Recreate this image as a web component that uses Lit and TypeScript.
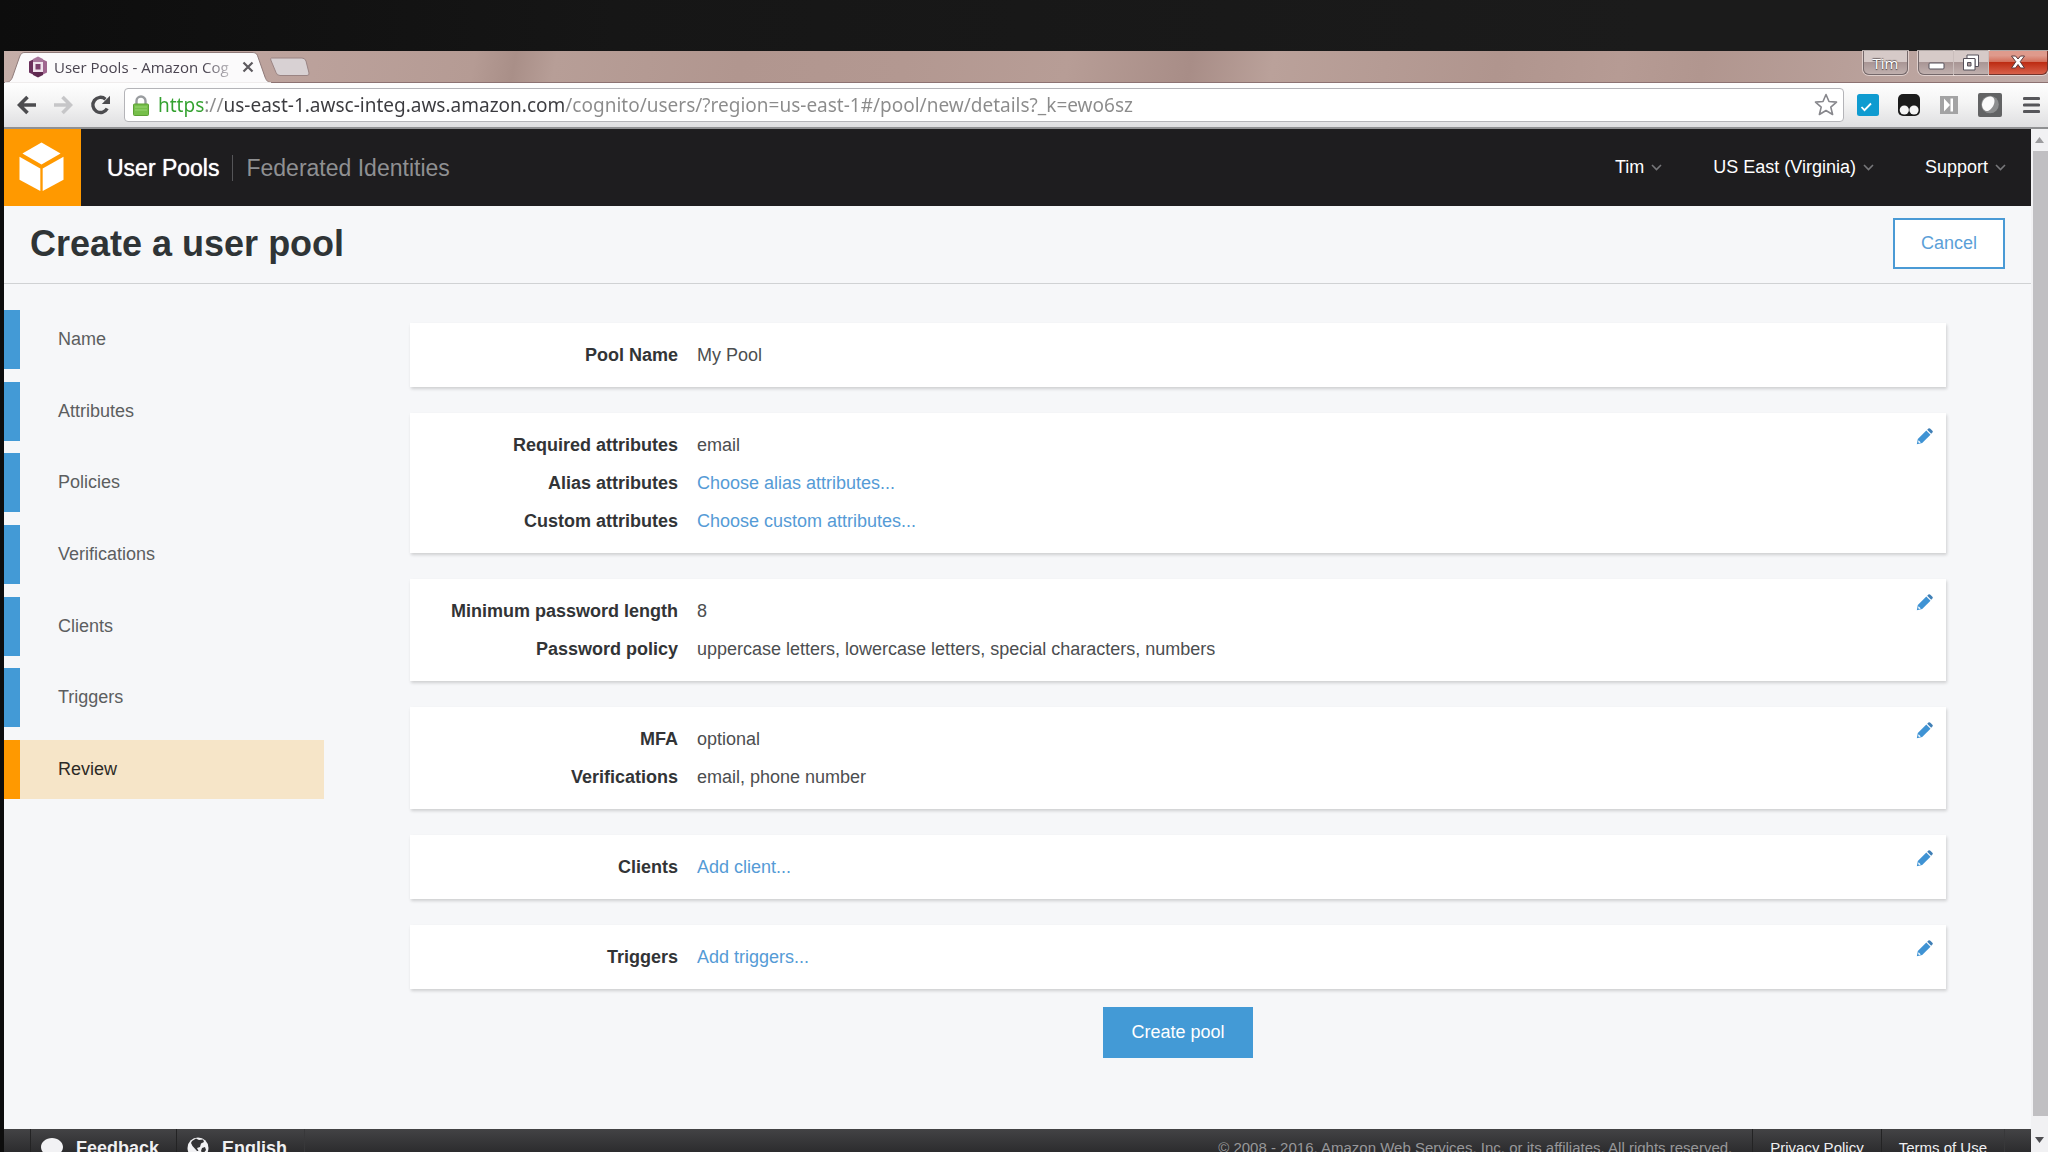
import { LitElement, html, css, svg, nothing } from "lit";
import { customElement, property, query } from "lit/decorators.js";
import { classMap } from "lit/directives/class-map.js";

interface Row {
  label: string;
  value: string;
  link?: boolean;
}

interface Section {
  rows: Row[];
  editable: boolean;
}

const STEPS = ["Name", "Attributes", "Policies", "Verifications", "Clients", "Triggers", "Review"];
const ACTIVE_STEP = "Review";

const SECTIONS: Section[] = [
  { editable: false, rows: [{ label: "Pool Name", value: "My Pool" }] },
  {
    editable: true,
    rows: [
      { label: "Required attributes", value: "email" },
      { label: "Alias attributes", value: "Choose alias attributes...", link: true },
      { label: "Custom attributes", value: "Choose custom attributes...", link: true },
    ],
  },
  {
    editable: true,
    rows: [
      { label: "Minimum password length", value: "8" },
      { label: "Password policy", value: "uppercase letters, lowercase letters, special characters, numbers" },
    ],
  },
  {
    editable: true,
    rows: [
      { label: "MFA", value: "optional" },
      { label: "Verifications", value: "email, phone number" },
    ],
  },
  { editable: true, rows: [{ label: "Clients", value: "Add client...", link: true }] },
  { editable: true, rows: [{ label: "Triggers", value: "Add triggers...", link: true }] },
];

const SCHEME = "https";
const HOST = "us-east-1.awsc-integ.aws.amazon.com";
const PATH = "/cognito/users/?region=us-east-1#/pool/new/details?_k=ewo6sz";

const chevron = svg`<svg class="chevron" width="11" height="7" viewBox="0 0 11 7" aria-hidden="true">
  <path d="M1 1l4.5 4.5L10 1" fill="none" stroke="#77777a" stroke-width="1.6"/></svg>`;

/* Title strip and toolbar of the browser window. */
@customElement("browser-chrome")
export class BrowserChrome extends LitElement {
  @query(".url") private urlInput!: HTMLInputElement;

  static styles = css`
    :host {
      display: block;
      font-family: "Open Sans", "Noto Sans", sans-serif;
    }
    button {
      appearance: none;
      border: 0;
      padding: 0;
      margin: 0;
      background: none;
      font: inherit;
      display: grid;
      place-items: center;
    }
    svg {
      display: block;
    }
    .strip {
      display: flex;
      height: 32px;
      box-sizing: border-box;
      border-bottom: 1px solid #8c7272;
      background: linear-gradient(
        100deg,
        #c5aea8 0%, #bca29c 14%, #b59b94 23%, #a98f88 25%, #b79e97 27%, #b1968f 36%,
        #b39891 44%, #b79d96 52%, #a88d87 58%, #baa19a 62%, #b0958e 73%, #b69b94 79%,
        #b1968f 83%, #b89f99 90%, #c2aeab 100%
      );
    }
    .tab {
      position: relative;
      display: flex;
      align-items: center;
      width: 266px;
      height: 32px;
      box-sizing: border-box;
      padding: 0 15px 0 24px;
      font-size: 15px;
      color: #4a4450;
    }
    .tab-shape {
      position: absolute;
      left: 0;
      top: 0;
    }
    .tab-icon {
      position: relative;
      flex: none;
    }
    .tab-title {
      position: relative;
      flex: 1;
      margin: 0 11px 0 6px;
      white-space: nowrap;
      overflow: hidden;
      -webkit-mask-image: linear-gradient(90deg, #000 85%, rgba(0, 0, 0, 0.3));
      mask-image: linear-gradient(90deg, #000 85%, rgba(0, 0, 0, 0.3));
    }
    .tab-close {
      position: relative;
      width: 14px;
      height: 14px;
    }
    .new-tab {
      align-self: flex-start;
      margin-top: 6px;
    }
    .controls {
      display: flex;
      align-items: flex-start;
      margin-left: auto;
    }
    .glass {
      height: 24px;
      box-sizing: border-box;
      border: 1px solid #74686a;
      border-top: 0;
      box-shadow: 0 0 0 1px rgba(240, 226, 224, 0.7);
      background: linear-gradient(#d6cac8 0 48%, #a99695 50%, #c0b0ae);
    }
    .user {
      width: 45px;
      margin-right: 10px;
      border-radius: 0 0 6px 6px;
      font-size: 15px;
      line-height: 20px;
      color: #ffffff;
      text-shadow: 0 1px 1px #4b4345, 0 -1px 1px #6f6567;
    }
    .minimize {
      width: 36px;
      border-radius: 0 0 0 6px;
    }
    .restore {
      width: 35px;
      border-left: 0;
    }
    .close {
      width: 59px;
      border-left: 0;
      border-color: #74332b;
      border-radius: 0 0 6px 0;
      background: linear-gradient(#df9a8c 0 20%, #d3705c 46%, #bd2c13 50%, #d8604a);
    }
    .bar {
      display: flex;
      align-items: center;
      height: 46px;
      box-sizing: border-box;
      padding: 0 8px 0 13px;
      border-bottom: 2px solid #8f9092;
      background: linear-gradient(#fefefe, #f4f4f4 45%, #dfdfe1);
    }
    .nav {
      display: flex;
      gap: 16px;
      margin-right: 13px;
    }
    .address {
      flex: 1;
      display: flex;
      align-items: center;
      height: 34px;
      box-sizing: border-box;
      margin-right: 13px;
      padding: 0 5px 0 8px;
      border: 1px solid #b4b4b8;
      border-radius: 4px;
      background: #fff;
    }
    .url {
      --scheme-end: 46px;
      --host-start: 66px;
      --host-end: 410px;
      flex: 1;
      min-width: 0;
      margin: 0 8px 0 9px;
      padding: 0;
      border: 0;
      outline: 0;
      font-family: "Noto Sans", "Open Sans", sans-serif;
      font-size: 19px;
      line-height: 28px;
      background: linear-gradient(
        90deg,
        #33a12f 0 var(--scheme-end),
        #8b8b8b var(--scheme-end) var(--host-start),
        #3b3b3f var(--host-start) var(--host-end),
        #8b8b8b var(--host-end)
      );
      -webkit-background-clip: text;
      background-clip: text;
      color: transparent;
    }
    .extensions {
      display: flex;
      align-items: center;
      gap: 19px;
    }
    .menu {
      margin-left: 2px;
    }
  `;

  /* Places the colour stops of the address at the ends of its scheme and host. */
  firstUpdated() {
    const context = document.createElement("canvas").getContext("2d");
    if (!context) return;
    const { fontSize, fontFamily } = getComputedStyle(this.urlInput);
    context.font = `${fontSize} ${fontFamily}`;
    const width = (text: string) => `${Math.round(context.measureText(text).width)}px`;
    const style = this.urlInput.style;
    style.setProperty("--scheme-end", width(SCHEME));
    style.setProperty("--host-start", width(`${SCHEME}://`));
    style.setProperty("--host-end", width(`${SCHEME}://${HOST}`));
  }

  render() {
    return html`
      <div class="strip">
        <div class="tab">
          <svg class="tab-shape" width="268" height="32" viewBox="0 0 268 32" aria-hidden="true">
            <path d="M0 32V31.500C5 31.500 7 30 8.500 26L15.500 6C17 2.500 18 1.500 21 1.500H248C251.500 1.500 253 2.500 254 6L261 26C262.500 30 264 31.500 268 31.500V32Z" fill="#fbfafb" stroke="#8f7a79" stroke-width="1"/>
            <path d="M1 32h266" stroke="#fdfdfd" stroke-width="1.500"/>
          </svg>
          <svg class="tab-icon" width="20" height="22" viewBox="0 0 20 22" aria-hidden="true">
            <path d="M10 .5l5 2.500v3H5V3z" fill="#a8769b"/>
            <path d="M1 5.500l4-2v15l-4-2z" fill="#6b2f5c"/>
            <path d="M19 5.500l-4-2v15l4-2z" fill="#a0668f"/>
            <path d="M5 16h10v3l-5 2.500L5 19z" fill="#5f2950"/>
            <path d="M5 6h10v10H5z" fill="#efe2ec"/>
            <path d="M7.500 8h5v5.500h-5z" fill="#7b3f6c"/>
          </svg>
          <span class="tab-title">User Pools - Amazon Cognito</span>
          <button class="tab-close" aria-label="Close tab">
            <svg width="12" height="12" viewBox="0 0 12 12"><path d="M1.500 1.500l9 9M10.500 1.500l-9 9" stroke="#5d5a5f" stroke-width="2.200"/></svg>
          </button>
        </div>
        <button class="new-tab" aria-label="New tab">
          <svg width="40" height="20" viewBox="0 0 40 20">
            <path d="M1.500 1H32q3 0 4 3l3 12q.5 2.500-2 2.500H10q-3 0-4-3L.8 3Q.3 1 1.500 1z" fill="#d8d1d3" stroke="#9a8483"/>
          </svg>
        </button>
        <div class="controls">
          <button class="glass user">Tim</button>
          <button class="glass minimize" aria-label="Minimize">
            <svg width="17" height="20" viewBox="0 0 17 20"><rect x="1" y="10" width="15" height="6" rx="1" fill="#fff" stroke="#55505a"/></svg>
          </button>
          <button class="glass restore" aria-label="Restore">
            <svg width="18" height="18" viewBox="0 0 18 18">
              <path d="M5 1h11.500v11.500H13V5H5z" fill="#fff" stroke="#55505a"/>
              <path d="M1.500 4.500h11.500V16H1.500zM5.500 8.500v3.500h3.500V8.500z" fill="#fff" fill-rule="evenodd" stroke="#55505a"/>
            </svg>
          </button>
          <button class="glass close" aria-label="Close">
            <svg width="16" height="18" viewBox="0 0 16 18">
              <path d="M1.500 2h4L8 5l2.500-3h4l-4.300 5.700L14.500 14h-4L8 10.500 5.500 14h-4l4.300-6.300z" fill="#fff" stroke="#5b3a3c"/>
            </svg>
          </button>
        </div>
      </div>
      <div class="bar">
        <div class="nav">
          <button aria-label="Back">
            <svg width="20" height="20" viewBox="0 0 20 20"><path d="M19 10H4M10.500 2L2.500 10l8 8" fill="none" stroke="#4c4c4f" stroke-width="3.600"/></svg>
          </button>
          <button aria-label="Forward">
            <svg width="20" height="20" viewBox="0 0 20 20"><path d="M1 10h15M9.500 2l8 8-8 8" fill="none" stroke="#c6c6c8" stroke-width="3.600"/></svg>
          </button>
          <button aria-label="Reload">
            <svg width="22" height="20" viewBox="0 0 22 20">
              <path d="M18.200 13.500A7.600 7.600 0 1 1 16.500 4.200" fill="none" stroke="#4c4c4f" stroke-width="3.400"/>
              <path d="M21 .8v8.200h-8.200z" fill="#4c4c4f"/>
            </svg>
          </button>
        </div>
        <div class="address">
          <svg width="16" height="21" viewBox="0 0 16 21" aria-hidden="true">
            <path d="M3.500 10V6a4.500 4.500 0 0 1 9 0v4" fill="none" stroke="#9a9da0" stroke-width="2.400"/>
            <rect x=".5" y="9" width="15" height="11.500" rx="1" fill="#76bf4a" stroke="#5da035"/>
            <path d="M2 12h12M2 15h12" stroke="#9ad574" stroke-width="1.200"/>
          </svg>
          <input class="url" type="text" aria-label="Address" .value=${`${SCHEME}://${HOST}${PATH}`} />
          <button aria-label="Bookmark this page">
            <svg width="24" height="24" viewBox="0 0 24 24">
              <path d="M12 1.500l3 7 7.500.6-5.700 5 1.800 7.400-6.600-4-6.600 4 1.800-7.400-5.700-5L9 8.500z" fill="#fff" stroke="#87878c" stroke-width="1.600" stroke-linejoin="round"/>
            </svg>
          </button>
        </div>
        <div class="extensions">
          <button aria-label="Checklist">
            <svg width="22" height="22" viewBox="0 0 22 22"><rect width="22" height="22" rx="2.500" fill="#0f9bd0"/><path d="M4.500 13l3 3.200L14 9.500" fill="none" stroke="#fff" stroke-width="1.800"/></svg>
          </button>
          <button aria-label="User scripts">
            <svg width="22" height="22" viewBox="0 0 22 22"><rect width="22" height="22" rx="5" fill="#1b1b1b"/><circle cx="6.300" cy="16" r="4.600" fill="#f5f5f5"/><circle cx="16" cy="16" r="4.600" fill="#f5f5f5"/></svg>
          </button>
          <button aria-label="Skip">
            <svg width="20" height="20" viewBox="0 0 20 20"><rect x="1" y="1" width="18" height="18" fill="#a3a3a4"/><path d="M5 3.500l6 6.500-6 6.500zM11.500 3.500H14v13h-2.500z" fill="#fff"/></svg>
          </button>
          <button aria-label="Shade">
            <svg width="24" height="24" viewBox="0 0 24 24"><rect width="24" height="24" rx="2" fill="#626364"/><circle cx="12" cy="11.500" r="8.800" fill="#8d8e8f"/><path d="M4 12C4 7 8 3 13 3.500c3.500.8 4 4 3 7.500-1 3-3 5.500-6 7C7 18.500 4.300 16 4 12z" fill="#fafafa"/></svg>
          </button>
          <button class="menu" aria-label="Menu">
            <svg width="17" height="18" viewBox="0 0 17 18"><path d="M1.500 2.500h14M1.500 9h14M1.500 15.500h14" stroke="#56565a" stroke-width="3.200" stroke-linecap="round"/></svg>
          </button>
        </div>
      </div>
    `;
  }
}

/* One white panel of label and value pairs, with an optional edit button. */
@customElement("review-card")
export class ReviewCard extends LitElement {
  @property({ attribute: false }) section!: Section;

  static styles = css`
    :host {
      display: flex;
      align-items: flex-start;
      padding: 13px;
      background: #fff;
      box-shadow: 1px 2px 3px rgba(0, 0, 0, 0.16);
    }
    .rows {
      flex: 1;
      margin: 0;
    }
    .row {
      display: grid;
      grid-template-columns: 255px 1fr;
      column-gap: 19px;
      line-height: 38px;
    }
    .label {
      text-align: right;
      font-weight: bold;
      color: #323436;
      white-space: nowrap;
    }
    .value {
      margin: 0;
      color: #4c4e50;
    }
    .link {
      color: #559bd6;
      text-decoration: none;
    }
    .edit {
      appearance: none;
      margin: 2px 0 0;
      padding: 0;
      border: 0;
      background: none;
    }
    .pencil {
      display: block;
    }
  `;

  render() {
    const { rows, editable } = this.section;
    return html`
      <dl class="rows">
        ${rows.map(
          (row) => html`
            <div class="row">
              <dt class="label">${row.label}</dt>
              <dd class="value">
                ${row.link ? html`<a class="link" href="#">${row.value}</a>` : row.value}
              </dd>
            </div>
          `
        )}
      </dl>
      ${editable
        ? html`<button class="edit" aria-label=${`Edit ${rows[0].label}`}>
            <svg class="pencil" width="17" height="17" viewBox="0 0 17 17">
              <path d="M10.300 2.600l4.200 4.200-8.300 8.300L.8 16.300l1-5.400z" fill="#3f93d4"/>
              <path d="M11.200 1.800l1.200-1.200q1-.8 2 .1l2 2q.8.900 0 1.900l-1.200 1.200z" fill="#3f7fb6"/>
              <path d="M2.600 12.200l2.200 2.200-1.700.5-1-1z" fill="#fff"/>
            </svg>
          </button>`
        : nothing}
    `;
  }
}

@customElement("app-root")
export class AppRoot extends LitElement {
  static styles = css`
    :host {
      display: flex;
      flex-direction: column;
      height: 100vh;
      overflow: hidden;
      box-sizing: border-box;
      padding: 51px 0 0 4px;
      background: linear-gradient(90deg, #0d0d0d, #161616 30%, #1b1b1b 80%);
      font-family: "Liberation Sans", Arial, sans-serif;
      font-size: 18px;
    }
    button {
      appearance: none;
      margin: 0;
      font: inherit;
    }
    a {
      text-decoration: none;
      color: inherit;
    }
    .viewport {
      flex: 1;
      min-height: 0;
      display: flex;
    }
    .page {
      flex: 1;
      min-width: 0;
      display: flex;
      flex-direction: column;
      background: #f6f7f9;
    }
    .header {
      display: flex;
      align-items: center;
      height: 77px;
      padding-right: 25px;
      background: #1e1d1f;
      color: #fff;
    }
    .logo {
      display: grid;
      place-items: center;
      align-self: stretch;
      box-sizing: border-box;
      width: 77px;
      margin-right: 26px;
      padding: 0 2px 2px 0;
      background: #ff9900;
    }
    .product {
      font-size: 23px;
      line-height: 26px;
      padding-right: 13px;
      border-right: 1px solid #555558;
      text-shadow: 0 0 1px #fff;
    }
    .federated {
      font-size: 23px;
      line-height: 26px;
      padding-left: 13px;
      color: #8f9092;
    }
    .menus {
      display: flex;
      gap: 51px;
      margin-left: auto;
    }
    .drop {
      display: flex;
      align-items: center;
      gap: 7px;
      padding: 0;
      border: 0;
      background: none;
      color: #fff;
    }
    .titlebar {
      display: flex;
      justify-content: space-between;
      align-items: center;
      height: 78px;
      box-sizing: border-box;
      padding: 0 26px 2px;
      border-bottom: 1px solid #d0d2d4;
    }
    .title {
      margin: 0;
      font-size: 36px;
      line-height: 40px;
      color: #2f3436;
    }
    .cancel {
      height: 51px;
      box-sizing: border-box;
      padding: 0 26px;
      border: 2px solid #4a9ad5;
      background: #fff;
      color: #5b9fd8;
    }
    .body {
      flex: 1;
      min-height: 0;
      display: flex;
      align-items: flex-start;
      padding-top: 26px;
    }
    .steps {
      display: flex;
      flex-direction: column;
      justify-content: space-between;
      width: 320px;
      min-height: 489px;
      margin: 0;
      padding: 0;
      list-style: none;
    }
    .step {
      display: block;
      padding-left: 38px;
      border-left: 16px solid #439ad6;
      line-height: 59px;
      color: #5c5e60;
    }
    .active {
      border-color: #ff9900;
      background: #f6e5c8;
      color: #2d2a26;
    }
    .content {
      flex: 1;
      display: flex;
      flex-direction: column;
      gap: 26px;
      padding: 13px 85px 0 86px;
    }
    .create {
      align-self: center;
      height: 51px;
      margin-top: -8px;
      padding: 0 28px;
      border: 0;
      background: #439ad6;
      color: #fff;
    }
    .footer {
      flex: none;
      display: flex;
      align-items: flex-start;
      height: 23px;
      overflow: hidden;
      padding: 0 26px;
      background: linear-gradient(#434345, #2c2c2e);
      color: #fff;
      line-height: 38px;
    }
    .foot-item {
      display: flex;
      align-items: center;
      gap: 13px;
      padding: 0 17px 0 10px;
      border-left: 1px solid #232324;
      font-weight: bold;
      color: #f0f0f2;
    }
    .foot-end {
      border-right: 1px solid #38383a;
    }
    .copyright {
      margin-left: auto;
      padding-right: 20px;
      font-size: 15px;
      color: #98989a;
    }
    .foot-link {
      padding: 0 17px;
      border-left: 1px solid #232324;
      font-size: 15px;
      color: #f0f0f2;
    }
    .scrollbar {
      display: flex;
      flex-direction: column;
      width: 17px;
      background: #f1f1f3;
    }
    .arrow {
      height: 22px;
      padding: 0;
      border: 0;
      background: none;
      display: grid;
      place-items: center;
    }
    .arrow-down {
      height: 36px;
      padding-top: 12px;
    }
    .thumb {
      flex: 1;
      margin-left: 2px;
      background: #c0bfc2;
    }
  `;

  render() {
    return html`
      <browser-chrome></browser-chrome>
      <div class="viewport">
        <div class="page">
          <header class="header">
            <a class="logo" href="#" aria-label="Console home">
              <svg width="45" height="50" viewBox="0 0 46 50">
                <path d="M23 0l19.500 11.200L23 22.500 3.500 11.200z" fill="#fff"/>
                <path d="M.5 14.500L21.800 26.500V49.500L.5 38z" fill="#fff"/>
                <path d="M45.500 14.500L24.200 26.500V49.500L45.500 38z" fill="#fff"/>
              </svg>
            </a>
            <a class="product" href="#">User Pools</a>
            <a class="federated" href="#">Federated Identities</a>
            <div class="menus">
              ${["Tim", "US East (Virginia)", "Support"].map(
                (label) => html`<button class="drop">${label} ${chevron}</button>`
              )}
            </div>
          </header>
          <div class="titlebar">
            <h1 class="title">Create a user pool</h1>
            <button class="cancel">Cancel</button>
          </div>
          <div class="body">
            <nav>
              <ul class="steps">
                ${STEPS.map(
                  (step) => html`<li>
                    <a class=${classMap({ step: true, active: step === ACTIVE_STEP })} href="#">${step}</a>
                  </li>`
                )}
              </ul>
            </nav>
            <main class="content">
              ${SECTIONS.map((section) => html`<review-card .section=${section}></review-card>`)}
              <button class="create">Create pool</button>
            </main>
          </div>
          <footer class="footer">
            <a class="foot-item" href="#">
              <svg width="22" height="20" viewBox="0 0 22 20"><path d="M11 0c6 0 11 4 11 9s-5 9-11 9l-6 2 1-3C2.500 15.500 0 12.500 0 9c0-5 5-9 11-9z" fill="#f2f2f4"/></svg>
              Feedback
            </a>
            <a class="foot-item foot-end" href="#">
              <svg width="22" height="22" viewBox="0 0 22 22"><circle cx="11" cy="11" r="10.500" fill="#f2f2f4"/><path d="M5 4l4-2.500 3 1.500 4-.5 1 2.500-3 1.500-1 3.500-3 1 1.500 3L10 14 5.500 9 4 6z" fill="#343436"/><path d="M15 11l3-1 1 3-3 4-2-3z" fill="#343436"/></svg>
              English
            </a>
            <span class="copyright">© 2008 - 2016, Amazon Web Services, Inc. or its affiliates. All rights reserved.</span>
            <a class="foot-link" href="#">Privacy Policy</a>
            <a class="foot-link foot-end" href="#">Terms of Use</a>
          </footer>
        </div>
        <div class="scrollbar">
          <button class="arrow" aria-label="Scroll up">
            <svg width="9" height="6" viewBox="0 0 9 6"><path d="M0 6l4.500-6L9 6z" fill="#9c9c9f"/></svg>
          </button>
          <div class="thumb"></div>
          <button class="arrow arrow-down" aria-label="Scroll down">
            <svg width="9" height="6" viewBox="0 0 9 6"><path d="M0 0l4.500 6L9 0z" fill="#4e4e52"/></svg>
          </button>
        </div>
      </div>
    `;
  }
}
